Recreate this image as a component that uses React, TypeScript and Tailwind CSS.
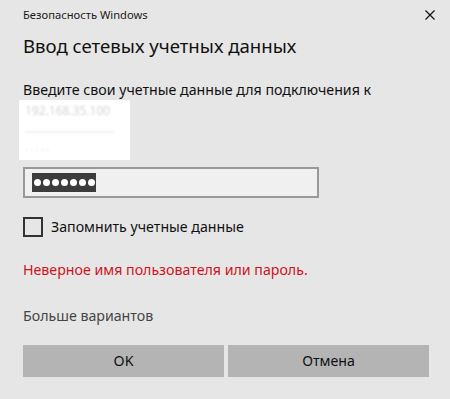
export default function App() {
  const font = { fontFamily: '"Noto Sans", "Open Sans", sans-serif' };
  return (
    <div className="relative w-[450px] h-[399px] bg-[#e6e6e6] pl-[23px] text-black overflow-hidden" style={font}>
      {/* close */}
      <button className="absolute right-[14px] top-[9px] w-[12px] h-[12px] text-[#111]">
        <svg viewBox="0 0 12 12" width="12" height="12" fill="none" stroke="currentColor" strokeWidth="1.2">
          <path d="M1.5 1.5 L10.5 10.5 M10.5 1.5 L1.5 10.5" />
        </svg>
      </button>

      <div className="pt-[7px] text-[11.2px] leading-[16px] text-[#1a1a1a]">Безопасность Windows</div>
      <h1 className="mt-[9px] text-[18.6px] leading-[28px] text-[#111]">Ввод сетевых учетных данных</h1>

      <p className="mt-[20px] text-[14.2px] leading-[20px] text-[#111]">
        Введите свои учетные данные для подключения к
      </p>

      {/* redacted host */}
      <div className="ml-[-4px] w-[111px] h-[60px] bg-white px-[6px] pt-[3px] overflow-hidden">
        <div className="blur-[1px] text-[12px] leading-[16px] text-[#d4d4d4]">192.168.35.100</div>
        <div className="mt-[12px] h-[2px] w-[90px] bg-[#f2f2f2] blur-[1px]" />
        <div className="mt-[8px] blur-[1px] text-[10px] leading-[12px] text-[#d8d8d8]">. . . . .</div>
      </div>

      {/* password field */}
      <div className="mt-[7px] w-[296px] h-[31px] border-2 border-[#999999] bg-[#f0f0f0] flex items-center pl-[7px]">
        <div className="h-[19px] w-[64px] bg-[#3c3c3c] flex items-center gap-[2px] pl-[2px]">
          {[0, 1, 2, 3, 4, 5, 6].map((i) => (
            <span key={i} className="w-[7px] h-[7px] rounded-full bg-white" />
          ))}
        </div>
      </div>

      {/* remember */}
      <label className="mt-[19px] flex items-center h-[20px]">
        <span className="w-[20px] h-[20px] border-2 border-[#333333] bg-transparent" />
        <span className="ml-[8px] text-[14.2px] leading-[20px] text-[#111]">Запомнить учетные данные</span>
      </label>

      <p className="mt-[23px] text-[14.2px] leading-[20px] text-[#d0131b]">Неверное имя пользователя или пароль.</p>

      <p className="mt-[26px] text-[14.2px] leading-[20px] text-[#454545]">Больше вариантов</p>

      <div className="mt-[19px] flex gap-[4px]">
        <button className="w-[201px] h-[32px] bg-[#b4b4b4] text-[14.2px] text-[#111]">OK</button>
        <button className="w-[201px] h-[32px] bg-[#b4b4b4] text-[14.2px] text-[#111]">Отмена</button>
      </div>
    </div>
  );
}
